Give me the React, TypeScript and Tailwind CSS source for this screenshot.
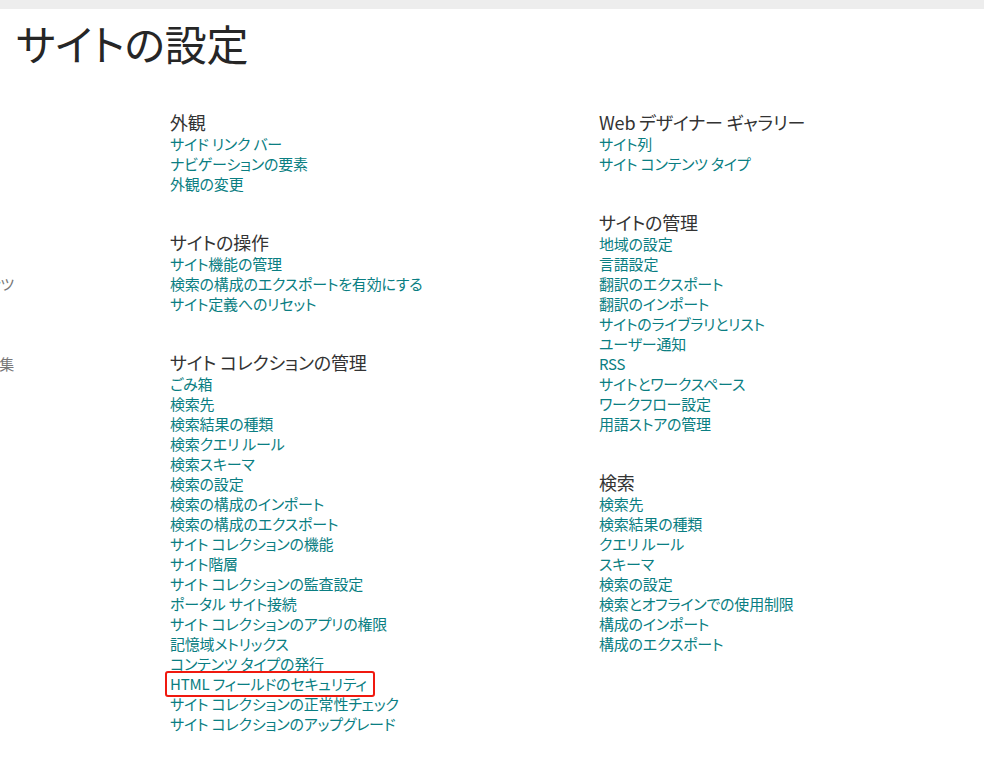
import React from 'react'

type Section = { title: string; links: string[]; highlight?: string }

const leftSections: Section[] = [
  { title: '外観', links: ['サイド リンク バー', 'ナビゲーションの要素', '外観の変更'] },
  { title: 'サイトの操作', links: ['サイト機能の管理', '検索の構成のエクスポートを有効にする', 'サイト定義へのリセット'] },
  {
    title: 'サイト コレクションの管理',
    highlight: 'HTML フィールドのセキュリティ',
    links: [
      'ごみ箱',
      '検索先',
      '検索結果の種類',
      '検索クエリ ルール',
      '検索スキーマ',
      '検索の設定',
      '検索の構成のインポート',
      '検索の構成のエクスポート',
      'サイト コレクションの機能',
      'サイト階層',
      'サイト コレクションの監査設定',
      'ポータル サイト接続',
      'サイト コレクションのアプリの権限',
      '記憶域メトリックス',
      'コンテンツ タイプの発行',
      'HTML フィールドのセキュリティ',
      'サイト コレクションの正常性チェック',
      'サイト コレクションのアップグレード',
    ],
  },
]

const rightSections: Section[] = [
  { title: 'Web デザイナー ギャラリー', links: ['サイト列', 'サイト コンテンツ タイプ'] },
  {
    title: 'サイトの管理',
    links: [
      '地域の設定',
      '言語設定',
      '翻訳のエクスポート',
      '翻訳のインポート',
      'サイトのライブラリとリスト',
      'ユーザー通知',
      'RSS',
      'サイトとワークスペース',
      'ワークフロー設定',
      '用語ストアの管理',
    ],
  },
  {
    title: '検索',
    links: [
      '検索先',
      '検索結果の種類',
      'クエリ ルール',
      'スキーマ',
      '検索の設定',
      '検索とオフラインでの使用制限',
      '構成のインポート',
      '構成のエクスポート',
    ],
  },
]

const SettingsSection = ({ section }: { section: Section }) => (
  <div className="flex flex-col">
    <h2 className="text-[18px] leading-[24px] text-[#333333]">{section.title}</h2>
    <ul className="flex flex-col">
      {section.links.map((link) => (
        <li key={link} className="h-5 flex items-center">
          {link === section.highlight ? (
            <a className="-ml-[5px] -my-[3px] px-[3px] h-[26px] flex items-center border-2 border-[#f0190f] rounded-[3px] w-[210px] text-[15px] text-[#0a7e82] whitespace-nowrap">
              {link}
            </a>
          ) : (
            <a className="text-[15px] leading-5 text-[#0a7e82] whitespace-nowrap">{link}</a>
          )}
        </li>
      ))}
    </ul>
  </div>
)

export default function App() {
  return (
    <div
      className="min-h-screen bg-white [font-feature-settings:'palt'] tracking-[-0.2px]"
      style={{ fontFamily: '"Noto Sans CJK JP", "Noto Sans", sans-serif' }}
    >
      <div className="h-[9px] bg-[#ededed]" />
      <h1 className="pl-[16px] pt-[10px] text-[42px] leading-[48px] text-[#262626]">サイトの設定</h1>

      <div className="flex mt-[43px]">
        {/* clipped quick launch */}
        <div className="w-[14px] overflow-hidden shrink-0 text-[15px] text-[#777777]">
          <div className="flex justify-end h-5 mt-[163px] whitespace-nowrap">サイト コンテンツ</div>
          <div className="flex justify-end h-5 mt-[60px] whitespace-nowrap">リンクの編集</div>
        </div>

        <div className="ml-[156px] w-[429px] flex flex-col gap-9">
          {leftSections.map((s) => (
            <SettingsSection key={s.title} section={s} />
          ))}
        </div>

        <div className="flex flex-col gap-9">
          {rightSections.map((s) => (
            <SettingsSection key={s.title} section={s} />
          ))}
        </div>
      </div>
    </div>
  )
}
